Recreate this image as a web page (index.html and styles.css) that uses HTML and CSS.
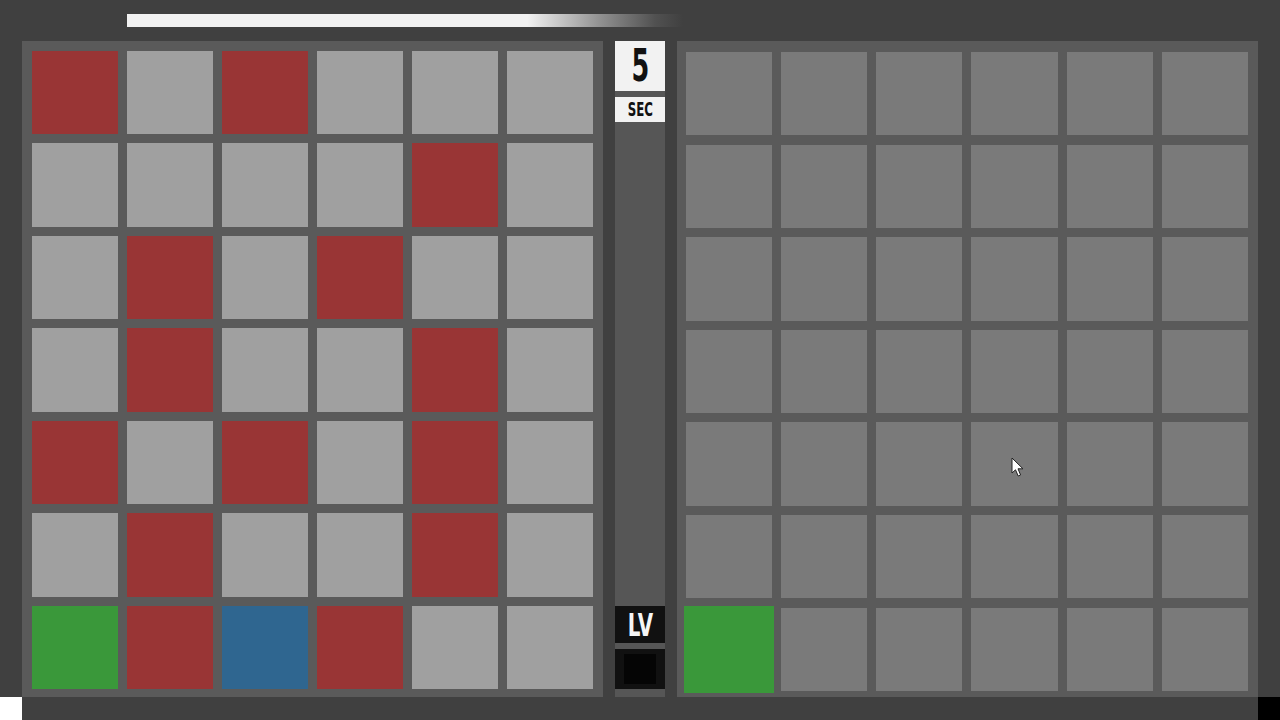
FILE: index.html
```html
<!DOCTYPE html>
<html>
<head>
<meta charset="utf-8">
<link rel="stylesheet" href="styles.css">
</head>
<body>
<div class="screen">
  <div class="top">
    <div class="timer-bar"></div>
  </div>
  <div class="main">
    <div class="panel">
      <div class="cell r"></div><div class="cell l"></div><div class="cell r"></div><div class="cell l"></div><div class="cell l"></div><div class="cell l"></div>
      <div class="cell l"></div><div class="cell l"></div><div class="cell l"></div><div class="cell l"></div><div class="cell r"></div><div class="cell l"></div>
      <div class="cell l"></div><div class="cell r"></div><div class="cell l"></div><div class="cell r"></div><div class="cell l"></div><div class="cell l"></div>
      <div class="cell l"></div><div class="cell r"></div><div class="cell l"></div><div class="cell l"></div><div class="cell r"></div><div class="cell l"></div>
      <div class="cell r"></div><div class="cell l"></div><div class="cell r"></div><div class="cell l"></div><div class="cell r"></div><div class="cell l"></div>
      <div class="cell l"></div><div class="cell r"></div><div class="cell l"></div><div class="cell l"></div><div class="cell r"></div><div class="cell l"></div>
      <div class="cell g"></div><div class="cell r"></div><div class="cell b"></div><div class="cell r"></div><div class="cell l"></div><div class="cell l"></div>
    </div>
    <div class="center">
      <div class="num-box"><span class="num">5</span></div>
      <div class="sec-box"><span class="sec">SEC</span></div>
      <div class="spacer"></div>
      <div class="lv-box"><span class="lv">LV</span></div>
      <div class="lv-slot"><div class="lv-inner"></div></div>
    </div>
    <div class="panel right">
      <div class="cell d"></div><div class="cell d"></div><div class="cell d"></div><div class="cell d"></div><div class="cell d"></div><div class="cell d"></div>
      <div class="cell d"></div><div class="cell d"></div><div class="cell d"></div><div class="cell d"></div><div class="cell d"></div><div class="cell d"></div>
      <div class="cell d"></div><div class="cell d"></div><div class="cell d"></div><div class="cell d"></div><div class="cell d"></div><div class="cell d"></div>
      <div class="cell d"></div><div class="cell d"></div><div class="cell d"></div><div class="cell d"></div><div class="cell d"></div><div class="cell d"></div>
      <div class="cell d"></div><div class="cell d"></div><div class="cell d"></div><div class="cell d"></div><div class="cell d"></div><div class="cell d"></div>
      <div class="cell d"></div><div class="cell d"></div><div class="cell d"></div><div class="cell d"></div><div class="cell d"></div><div class="cell d"></div>
      <div class="cell g big"></div><div class="cell d"></div><div class="cell d"></div><div class="cell d"></div><div class="cell d"></div><div class="cell d"></div>
    </div>
  </div>
  <div class="bottom">
    <div class="corner white"></div>
    <div class="corner black"></div>
  </div>
  <svg class="cursor" width="14" height="22" viewBox="0 0 14 22">
    <path d="M1 1 L1 16 L4.5 12.8 L7.2 19 L9.6 18 L7 11.8 L12 11.8 Z" fill="#ffffff" stroke="#222" stroke-width="1"/>
  </svg>
</div>
</body>
</html>
```

FILE: styles.css
```css
html, body {
  margin: 0;
  padding: 0;
}
body {
  background: #404040;
  font-family: "DejaVu Sans", sans-serif;
}
.screen {
  position: relative;
  width: 1280px;
  height: 720px;
  overflow: hidden;
  display: flex;
  flex-direction: column;
  background: #404040;
}
.top {
  height: 41px;
  padding-left: 127px;
  box-sizing: border-box;
  padding-top: 14px;
}
.timer-bar {
  width: 556px;
  height: 13px;
  background: linear-gradient(to right, #f2f2f2 0%, #f2f2f2 72%, rgba(200,200,200,0.6) 85%, rgba(120,120,120,0.3) 95%, rgba(64,64,64,0) 100%);
}
.main {
  display: flex;
  gap: 12px;
  padding-left: 22px;
  height: 656px;
}
.panel {
  width: 581px;
  box-sizing: border-box;
  background: #5a5a5a;
  padding: 10px 10px 8px 10px;
  display: grid;
  grid-template-columns: repeat(6, 1fr);
  grid-template-rows: repeat(7, 1fr);
  column-gap: 9px;
  row-gap: 9.3px;
}
.panel.right {
  padding: 11px 10px 6px 9px;
}
.cell.l { background: #a0a0a0; }
.cell.r { background: #993535; }
.cell.g { background: #3a983a; }
.cell.b { background: #2f6690; }
.cell.d { background: #7a7a7a; }
.cell.big { margin: -2px; }
.center {
  width: 50px;
  background: #565656;
  display: flex;
  flex-direction: column;
}
.num-box {
  height: 50px;
  background: #f2f2f2;
  display: flex;
  align-items: center;
  justify-content: center;
}
.num {
  display: inline-block;
  font-family: "DejaVu Sans", sans-serif;
  font-weight: bold;
  font-size: 44px;
  line-height: 1;
  color: #111;
  transform: scaleX(0.58);
}
.sec-box {
  margin-top: 6px;
  height: 25px;
  background: #f2f2f2;
  display: flex;
  align-items: center;
  justify-content: center;
}
.sec {
  display: inline-block;
  font-weight: bold;
  font-size: 19px;
  line-height: 1;
  color: #111;
  transform: scaleX(0.62);
}
.spacer { flex: 1; }
.lv-box {
  height: 37px;
  background: #111111;
  display: flex;
  align-items: center;
  justify-content: center;
}
.lv {
  display: inline-block;
  font-weight: bold;
  font-size: 32px;
  line-height: 1;
  color: #f5f5f5;
  transform: scaleX(0.62);
}
.lv-slot {
  margin-top: 6px;
  margin-bottom: 8px;
  height: 40px;
  background: #111111;
  display: flex;
  align-items: center;
  justify-content: center;
}
.lv-inner {
  width: 32px;
  height: 30px;
  background: #050505;
}
.bottom {
  flex: 1;
  display: flex;
  justify-content: space-between;
}
.corner {
  width: 22px;
  height: 100%;
}
.corner.white { background: #ffffff; }
.corner.black { background: #000000; }
.cursor {
  position: absolute;
  left: 1011px;
  top: 457px;
}
```
